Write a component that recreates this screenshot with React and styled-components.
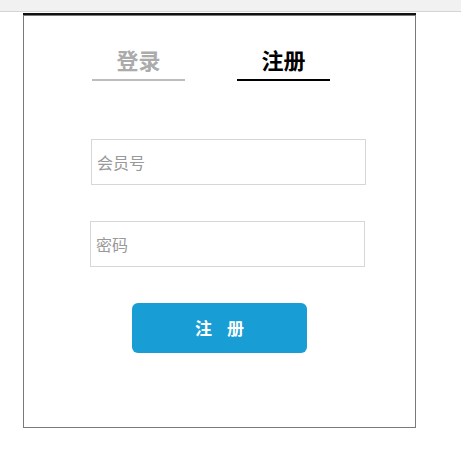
import React, {useState} from 'react'
import styled, {createGlobalStyle} from 'styled-components'

const GlobalStyle = createGlobalStyle`
  html, body {
    margin: 0;
    padding: 0;
    background: #fff;
    font-family: "Noto Sans CJK SC", "Liberation Sans", sans-serif;
  }
`

const TopBar = styled.div`
  height: 11px;
  background: #f1f1f1;
  border-bottom: 1px solid #d4d4d4;
`

const Card = styled.div`
  box-sizing: border-box;
  width: 393px;
  height: 413px;
  margin: 3px 0 0 23px;
  border: 1px solid #7a7a7a;
  box-shadow: 0 -2px 0 #111;
`

const Tabs = styled.div`
  display: flex;
  gap: 52px;
  padding: 34px 0 0 68px;
`

const Tab = styled.div`
  width: 93px;
  height: 29px;
  line-height: 19px;
  text-align: center;
  font-size: 22px;
  font-weight: bold;
  color: ${p => (p.$active ? '#000' : '#ababab')};
  border-bottom: 2px solid ${p => (p.$active ? '#000' : '#bdbdbd')};
  cursor: pointer;
`

const Form = styled.div`
  display: flex;
  flex-direction: column;
  align-items: flex-start;
  padding-top: 58px;
`

const Input = styled.input`
  box-sizing: border-box;
  width: 275px;
  height: 46px;
  margin: 0 0 36px ${p => p.$left}px;
  padding: 0 5px;
  border: 1px solid #d6d6d6;
  outline: none;
  font-family: inherit;
  font-size: 16px;
  color: #333;
  &::placeholder {
    color: #999;
  }
`

const Submit = styled.button`
  width: 175px;
  height: 50px;
  margin-left: 108px;
  padding: 0 0 2px 15px;
  border: none;
  border-radius: 6px;
  background: #199dd5;
  color: #fff;
  font-family: inherit;
  font-size: 17px;
  font-weight: bold;
  letter-spacing: 15px;
  cursor: pointer;
`

const App = () => {
  const [tab, setTab] = useState('register')
  return (
    <>
      <GlobalStyle />
      <TopBar />
      <Card>
        <Tabs>
          <Tab $active={tab === 'login'} onClick={() => setTab('login')}>登录</Tab>
          <Tab $active={tab === 'register'} onClick={() => setTab('register')}>注册</Tab>
        </Tabs>
        <Form>
          <Input $left={67} placeholder="会员号" />
          <Input $left={66} type="password" placeholder="密码" />
          <Submit>注册</Submit>
        </Form>
      </Card>
    </>
  )
}

export default App
